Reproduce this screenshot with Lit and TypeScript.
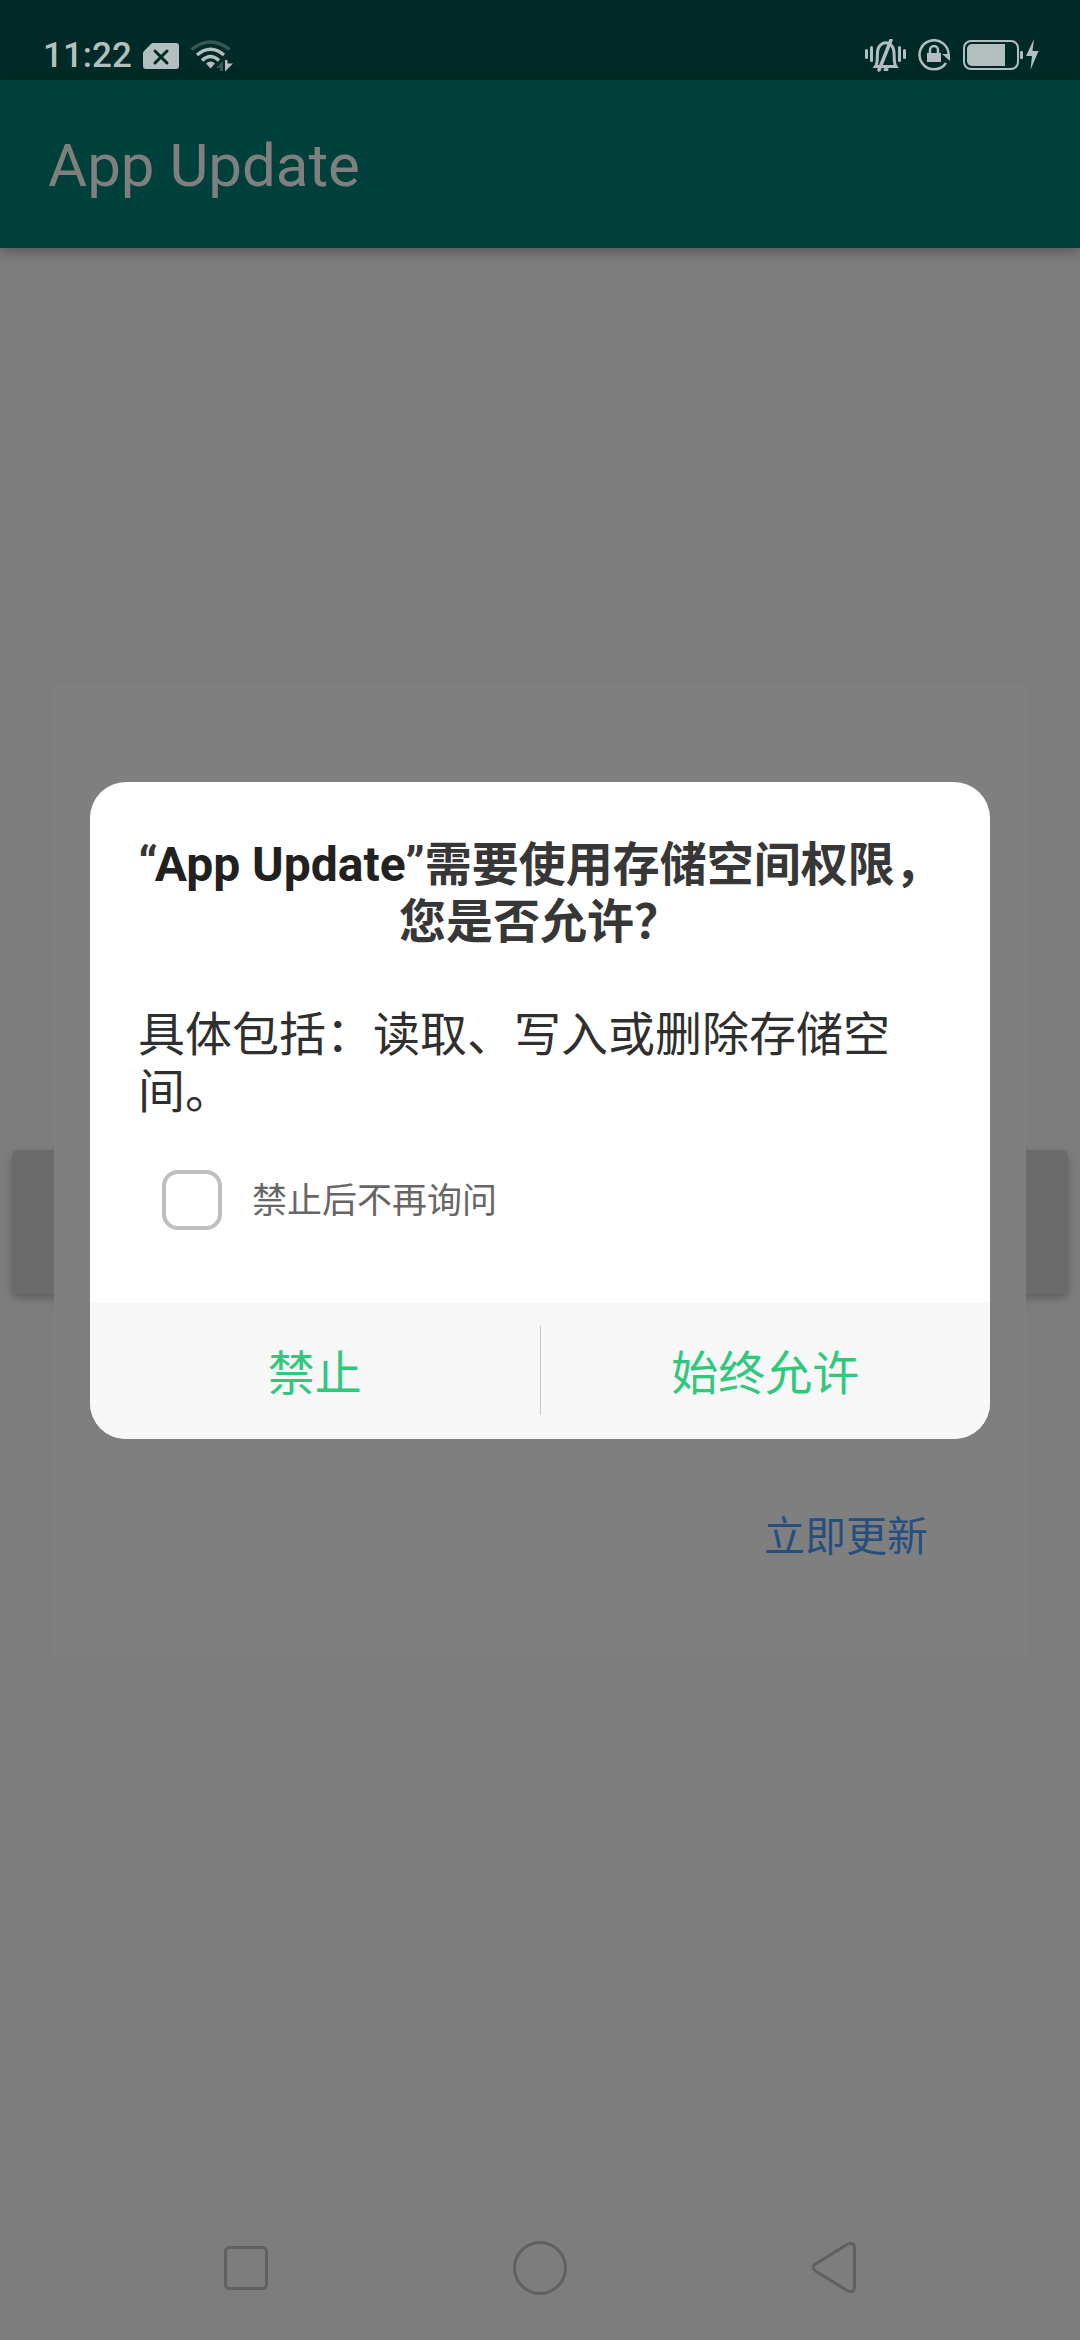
import { LitElement, html, css, svg } from "lit";
import { customElement, state } from "lit/decorators.js";

@customElement("status-bar")
class StatusBar extends LitElement {
  static styles = css`
    :host {
      display: flex;
      box-sizing: border-box;
      height: 80px;
      padding: 32px 40px 0 43px;
      align-items: center;
      justify-content: space-between;
      background: #002a25;
      color: #b2bfbe;
      font: 500 35px/48px Roboto, sans-serif;
    }
    .group { display: flex; align-items: center; }
    .left { gap: 10px; }
    .right { gap: 12px; }
    svg { display: block; }
  `;

  render() {
    return html`
      <div class="group left">
        <span>11:22</span>
        <svg width="38" height="28" viewBox="0 0 38 28" role="img" aria-label="No SIM">
          <path fill="currentColor" d="M11 1H34a3 3 0 0 1 3 3V24a3 3 0 0 1-3 3H4a3 3 0 0 1-3-3V11a3 3 0 0 1 1-2L9 2a3 3 0 0 1 2-1Z" />
          <path d="M13 9 25 21M25 9 13 21" stroke="#002a25" stroke-width="3" stroke-linecap="round" />
        </svg>
        <svg width="44" height="32" viewBox="0 0 44 32" role="img" aria-label="Wi-Fi">
          <g fill="none" stroke="currentColor" stroke-width="3.500">
            <path d="M1.500 9.500Q20.500-5.500 39.500 9.500" opacity=".3" />
            <path d="M7 15Q20.500 3.500 34 15" />
            <path d="M12 20.500Q20.500 12.500 29 20.500" />
          </g>
          <path fill="currentColor" d="M16 23.500Q20.500 19.500 25 23.500L20.500 28.500Z" />
          <path fill="currentColor" opacity=".3" d="M26 28 33 21V31H30V28Z" />
          <path fill="currentColor" d="M35 20H37.500V23.500H43L35 31.500Z" />
        </svg>
      </div>
      <div class="group right">
        <svg width="42" height="34" viewBox="0 0 42 34" role="img" aria-label="Vibrate">
          <g stroke="currentColor" stroke-width="3" fill="none" stroke-linecap="round">
            <path d="M2.500 11.500V18.500M7.500 8.500V21.500M35.500 8.500V21.500M40.500 11.500V18.500" />
            <path d="M11.500 27.500C14 24 13 19 13.500 13.500C14 .500 29.500 .500 30 13.500C30.500 19 29.500 24 32 27.500Z" stroke-linecap="butt" />
            <path d="M15 31 27 1" stroke-width="3.500" />
            <path d="M21 30.500H23" />
          </g>
        </svg>
        <svg width="33" height="34" viewBox="0 0 33 34" role="img" aria-label="Rotation locked">
          <path d="M30.500 17A14.500 14.500 0 1 0 28 24" fill="none" stroke="currentColor" stroke-width="2.500" />
          <path d="M24 15H32V22Z" fill="currentColor" />
          <rect x="9" y="14" width="14" height="9" fill="currentColor" />
          <path d="M12 15V11a4 4 0 0 1 8 0V15" fill="none" stroke="currentColor" stroke-width="2.500" />
        </svg>
        <svg width="77" height="34" viewBox="0 0 77 34" role="img" aria-label="Battery charging">
          <rect x="1" y="2" width="54" height="28" rx="7" fill="none" stroke="currentColor" stroke-width="2" />
          <path d="M9 5H42V27H9a5 5 0 0 1-5-5V10a5 5 0 0 1 5-5Z" fill="currentColor" />
          <rect x="57" y="12" width="3" height="8" rx="1" fill="currentColor" />
          <path d="M71 0 63 17H69L67.500 31 75.500 12H69.500Z" fill="currentColor" />
        </svg>
      </div>
    `;
  }
}

@customElement("permission-dialog")
class PermissionDialog extends LitElement {
  @state() private blocked = false;

  static styles = css`
    :host {
      display: block;
      overflow: hidden;
      border-radius: 36px;
      background: #fff;
      color: #373737;
    }
    .body { padding: 54px 48px 56px; }
    h2 {
      margin: 0;
      text-align: center;
      font-size: 47px;
      line-height: 57px;
      font-weight: 700;
    }
    .quoted { font-size: 48px; }
    .app { color: #212121; }
    p {
      margin: 56px 0 0;
      color: #2f2f2f;
      font-size: 47px;
      line-height: 57px;
    }
    .again {
      display: flex;
      align-items: center;
      gap: 30px;
      margin: 50px 0 16px 24px;
      color: #666;
      font-size: 35px;
      line-height: 48px;
    }
    .again span { padding-top: 4px; }
    input {
      appearance: none;
      box-sizing: border-box;
      width: 60px;
      height: 60px;
      margin: 0;
      border: 4px solid #bebebe;
      border-radius: 16px;
    }
    input:checked { background: #2fc97e; }
    .actions {
      display: grid;
      grid-template-columns: 1fr 1px 1fr;
      background: #f7f7f7;
    }
    .line { margin: 24px 0; background: #c9c9c9; }
    button {
      height: 137px;
      padding: 0 0 2px;
      border: 0;
      background: none;
      color: #2fc97e;
      font: inherit;
      font-size: 47px;
    }
  `;

  render() {
    return html`
      <div class="body">
        <h2><span class="quoted">“<span class="app">App Update</span>”</span>需要使用存储空间权限，<br />您是否允许？</h2>
        <p>具体包括：读取、写入或删除存储空间。</p>
        <label class="again">
          <input
            type="checkbox"
            .checked=${this.blocked}
            @change=${(e: Event) => (this.blocked = (e.target as HTMLInputElement).checked)}
          />
          <span>禁止后不再询问</span>
        </label>
      </div>
      <div class="actions">
        <button type="button">禁止</button>
        <span class="line"></span>
        <button type="button">始终允许</button>
      </div>
    `;
  }
}

const navIcons = [
  { label: "Recents", shape: svg`<rect x="8.500" y="7.500" width="41" height="41" rx="4" />` },
  { label: "Home", shape: svg`<circle cx="28" cy="28" r="25.500" />` },
  { label: "Back", shape: svg`<path d="M40 4.500 8.500 24Q3.500 27.500 8.500 31L40 50.500Q47.500 54 47.500 46V9Q47.500 1 40 4.500Z" />` },
];

@customElement("app-root")
class AppRoot extends LitElement {
  static styles = css`
    :host {
      display: flex;
      flex-direction: column;
      position: relative;
      min-height: 100vh;
      background: #7d7d7d;
      font-family: Roboto, "Noto Sans CJK SC", sans-serif;
    }
    .bar {
      display: flex;
      align-items: center;
      box-sizing: border-box;
      height: 168px;
      padding: 4px 48px 0;
      background: #00403a;
      box-shadow: 0 4px 12px rgba(0, 0, 0, 0.3);
    }
    h1 {
      margin: 0;
      color: #7f7f7f;
      font-size: 60px;
      line-height: 72px;
      font-weight: 400;
    }
    main {
      flex: 1;
      display: grid;
      align-items: center;
    }
    .page, .sheet { grid-area: 1 / 1; }
    .page {
      height: 144px;
      margin: 0 12px;
      border: 0;
      border-radius: 6px;
      background: #6b6b6b;
      box-shadow: 0 4px 8px rgba(0, 0, 0, 0.25);
    }
    .sheet {
      display: flex;
      align-items: flex-end;
      justify-content: flex-end;
      box-sizing: border-box;
      height: 970px;
      margin: 0 54px 104px;
      padding: 0 98px 88px 0;
      background: #7f7f7f;
    }
    .update {
      padding: 0;
      border: 0;
      background: none;
      color: #264f80;
      font: inherit;
      font-size: 41px;
      line-height: 60px;
    }
    .overlay {
      position: absolute;
      inset: 782px 90px auto;
    }
    nav {
      display: flex;
      justify-content: space-between;
      align-items: center;
      height: 144px;
      padding: 0 217px;
    }
    nav button {
      display: flex;
      padding: 0;
      border: 0;
      background: none;
    }
    nav svg {
      fill: none;
      stroke: #606060;
      stroke-width: 3px;
    }
  `;

  render() {
    return html`
      <status-bar></status-bar>
      <header class="bar"><h1>App Update</h1></header>
      <main>
        <button class="page" type="button" aria-label="更新"></button>
        <section class="sheet">
          <button class="update" type="button">立即更新</button>
        </section>
      </main>
      <nav>
        ${navIcons.map(
          (icon) => html`<button type="button" aria-label=${icon.label}>
            <svg width="56" height="56" viewBox="0 0 56 56">${icon.shape}</svg>
          </button>`
        )}
      </nav>
      <permission-dialog class="overlay" role="dialog" aria-modal="true"></permission-dialog>
    `;
  }
}
